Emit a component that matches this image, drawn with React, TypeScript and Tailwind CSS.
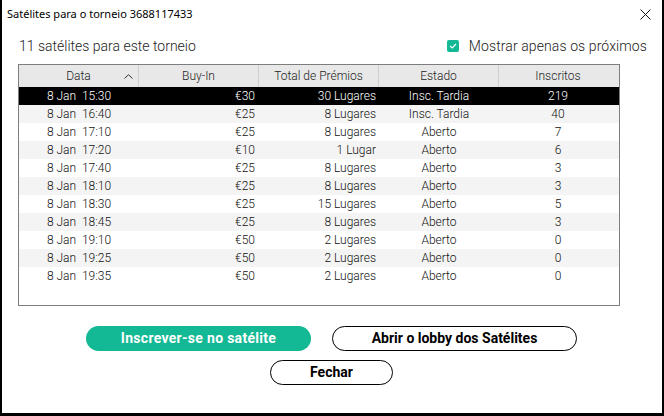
import React from 'react';

// ===========================
// Data
// ===========================
type Row = { date: string; buyIn: string; prize: string; status: string; entrants: string };

const rows: Row[] = [
  { date: '8 Jan  15:30', buyIn: '€30', prize: '30 Lugares', status: 'Insc. Tardia', entrants: '219' },
  { date: '8 Jan  16:40', buyIn: '€25', prize: '8 Lugares', status: 'Insc. Tardia', entrants: '40' },
  { date: '8 Jan  17:10', buyIn: '€25', prize: '8 Lugares', status: 'Aberto', entrants: '7' },
  { date: '8 Jan  17:20', buyIn: '€10', prize: '1 Lugar', status: 'Aberto', entrants: '6' },
  { date: '8 Jan  17:40', buyIn: '€25', prize: '8 Lugares', status: 'Aberto', entrants: '3' },
  { date: '8 Jan  18:10', buyIn: '€25', prize: '8 Lugares', status: 'Aberto', entrants: '3' },
  { date: '8 Jan  18:30', buyIn: '€25', prize: '15 Lugares', status: 'Aberto', entrants: '5' },
  { date: '8 Jan  18:45', buyIn: '€25', prize: '8 Lugares', status: 'Aberto', entrants: '3' },
  { date: '8 Jan  19:10', buyIn: '€50', prize: '2 Lugares', status: 'Aberto', entrants: '0' },
  { date: '8 Jan  19:25', buyIn: '€50', prize: '2 Lugares', status: 'Aberto', entrants: '0' },
  { date: '8 Jan  19:35', buyIn: '€50', prize: '2 Lugares', status: 'Aberto', entrants: '0' },
];

const roboto = "font-['Roboto','Liberation_Sans',sans-serif]";

// ===========================
// Header cell
// ===========================
function HeaderCell({ children, sort, last }: { children: React.ReactNode; sort?: boolean; last?: boolean }) {
  return (
    <div className={`relative flex items-center justify-center h-full ${last ? '' : 'border-r border-[#cfcfcf]'}`}>
      <span>{children}</span>
      {sort && (
        <svg className="absolute right-[5px] top-[9px]" width="9" height="5" viewBox="0 0 9 5" fill="none">
          <path d="M0.5 4.5L4.5 0.7L8.5 4.5" stroke="#333" strokeWidth="1" />
        </svg>
      )}
    </div>
  );
}

// ===========================
// App
// ===========================
export default function App() {
  return (
    <div className={`w-[664px] h-[416px] bg-white border-l-2 border-r-2 border-b-[3px] border-black flex flex-col ${roboto}`}>
      {/* Title bar */}
      <div className="h-[28px] flex items-center justify-between pl-[5px] pr-[11px] flex-shrink-0">
        <span className="text-[11px] text-black font-['Noto_Sans','Open_Sans',sans-serif]">
          Satélites para o torneio 3688117433
        </span>
        <svg width="11" height="11" viewBox="0 0 11 11" fill="none">
          <path d="M0.5 0.5L10.5 10.5M10.5 0.5L0.5 10.5" stroke="#111" strokeWidth="1" />
        </svg>
      </div>

      {/* Sub header */}
      <div className="mt-[8px] h-[20px] flex items-center justify-between pl-[17px] pr-[15px] font-light">
        <span className="text-[14px] text-[#222]">11 satélites para este torneio</span>
        <div className="flex items-center gap-[10px]">
          <span className="w-[12px] h-[12px] rounded-[2px] bg-[#13b894] flex items-center justify-center">
            <svg width="8" height="6" viewBox="0 0 8 6" fill="none">
              <path d="M1 3L3.2 5L7 1" stroke="white" strokeWidth="1.2" />
            </svg>
          </span>
          <span className="text-[14px] text-[#222] tracking-[0.1px]">Mostrar apenas os próximos</span>
        </div>
      </div>

      {/* Table */}
      <div className="mt-[8px] ml-[16px] w-[602px] h-[242px] border border-[#7d7d7d] text-[12px] text-[#111] font-light flex flex-col">
        <div className="h-[22px] grid grid-cols-[120px_120px_120px_120px_118px] bg-[#e8e8e8] text-[#222]">
          <HeaderCell sort>Data</HeaderCell>
          <HeaderCell>Buy-In</HeaderCell>
          <HeaderCell>Total de Prémios</HeaderCell>
          <HeaderCell>Estado</HeaderCell>
          <HeaderCell last>Inscritos</HeaderCell>
        </div>
        {rows.map((r, i) => (
          <div
            key={r.date}
            className={`h-[18px] grid grid-cols-[120px_120px_120px_120px_118px] items-center ${
              i === 0 ? 'bg-black text-white' : i % 2 === 1 ? 'bg-[#f4f4f4]' : 'bg-white'
            }`}
          >
            <span className="text-center whitespace-pre">{r.date}</span>
            <span className="text-right pr-[4px]">{r.buyIn}</span>
            <span className="text-right pr-[3px]">{r.prize}</span>
            <span className="text-center">{r.status}</span>
            <span className="text-center">{r.entrants}</span>
          </div>
        ))}
      </div>

      {/* Buttons */}
      <div className="mt-[20px] flex gap-[21px] pl-[84px] text-[14px] font-bold">
        <button className="w-[225px] h-[25px] rounded-full bg-[#13b894] text-white tracking-[0.3px]">Inscrever-se no satélite</button>
        <button className="w-[245px] h-[25px] rounded-full border border-black text-black">Abrir o lobby dos Satélites</button>
      </div>
      <div className="mt-[9px] flex pl-[268px] text-[14px] font-bold">
        <button className="w-[123px] h-[25px] rounded-full border border-black text-black">Fechar</button>
      </div>
    </div>
  );
}
